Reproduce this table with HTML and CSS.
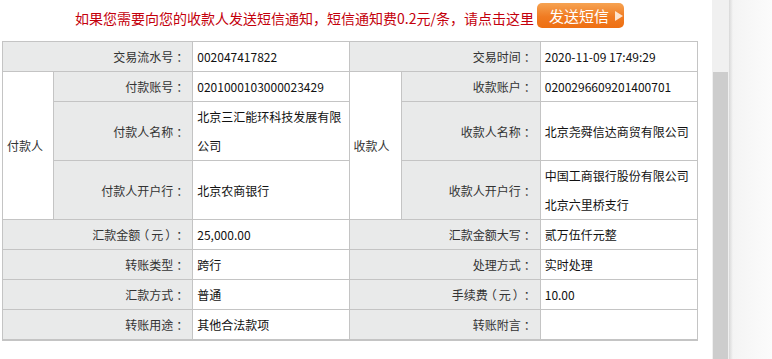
FILE: index.html
```html
<!DOCTYPE html>
<html lang="zh-CN">
<head>
<meta charset="utf-8">
<title>交易详情</title>
<link rel="stylesheet" href="styles.css">
</head>
<body>
<div class="frame">
  <main class="main">
    <div class="notice">
      <span class="notice-text">如果您需要向您的收款人发送短信通知，短信通知费0.2元/条，请点击这里</span>
      <a class="sms-btn" href="#">发送短信<span class="tri"></span></a>
    </div>
    <table class="detail">
      <colgroup>
        <col class="c-grp"><col class="c-lbl"><col class="c-val">
        <col class="c-grp"><col class="c-lbl"><col class="c-val">
      </colgroup>
      <tr>
        <td class="lbl" colspan="2">交易流水号<span class="colon">：</span></td>
        <td class="val">002047417822</td>
        <td class="lbl" colspan="2">交易时间<span class="colon">：</span></td>
        <td class="val">2020-11-09 17:49:29</td>
      </tr>
      <tr>
        <td class="grp" rowspan="3">付款人</td>
        <td class="lbl">付款账号<span class="colon">：</span></td>
        <td class="val">0201000103000023429</td>
        <td class="grp grp-r" rowspan="3">收款人</td>
        <td class="lbl">收款账户<span class="colon">：</span></td>
        <td class="val">0200296609201400701</td>
      </tr>
      <tr>
        <td class="lbl">付款人名称<span class="colon">：</span></td>
        <td class="val">北京三汇能环科技发展有限公司</td>
        <td class="lbl">收款人名称<span class="colon">：</span></td>
        <td class="val">北京尧舜信达商贸有限公司</td>
      </tr>
      <tr>
        <td class="lbl">付款人开户行<span class="colon">：</span></td>
        <td class="val">北京农商银行</td>
        <td class="lbl">收款人开户行<span class="colon">：</span></td>
        <td class="val">中国工商银行股份有限公司北京六里桥支行</td>
      </tr>
      <tr>
        <td class="lbl" colspan="2">汇款金额<span class="paren">（元）</span><span class="colon">：</span></td>
        <td class="val">25,000.00</td>
        <td class="lbl" colspan="2">汇款金额大写<span class="colon">：</span></td>
        <td class="val">贰万伍仟元整</td>
      </tr>
      <tr>
        <td class="lbl" colspan="2">转账类型<span class="colon">：</span></td>
        <td class="val">跨行</td>
        <td class="lbl" colspan="2">处理方式<span class="colon">：</span></td>
        <td class="val">实时处理</td>
      </tr>
      <tr>
        <td class="lbl" colspan="2">汇款方式<span class="colon">：</span></td>
        <td class="val">普通</td>
        <td class="lbl" colspan="2">手续费<span class="paren">（元）</span><span class="colon">：</span></td>
        <td class="val">10.00</td>
      </tr>
      <tr class="last">
        <td class="lbl" colspan="2">转账用途<span class="colon">：</span></td>
        <td class="val">其他合法款项</td>
        <td class="lbl" colspan="2">转账附言<span class="colon">：</span></td>
        <td class="val"></td>
      </tr>
    </table>
  </main>
  <div class="scrollbar"><div class="thumb"></div></div>
  <div class="side"></div>
</div>
</body>
</html>
```

FILE: styles.css
```css
html, body {
  margin: 0;
  padding: 0;
  background: #fff;
  height: 100%;
  overflow: hidden;
}
body {
  font-family: "Noto Sans CJK SC", "Microsoft YaHei", sans-serif;
  color: #333;
}
.frame {
  display: flex;
  height: 359px;
}
.main {
  width: 712px;
  flex: none;
  padding-left: 2px;
  box-sizing: border-box;
}
.notice {
  width: 695px;
  height: 41px;
  display: flex;
  justify-content: center;
  align-items: flex-start;
  gap: 3px;
}
.notice-text {
  margin-top: 8px;
  font-size: 14px;
  line-height: 20px;
  color: #c4000c;
}
.sms-btn {
  margin-top: 3px;
  width: 87px;
  height: 25px;
  box-sizing: border-box;
  border-radius: 5px;
  background: linear-gradient(#f6a352, #f07b22 55%, #ee6f12);
  color: #fff;
  font-size: 15px;
  line-height: 25px;
  text-decoration: none;
  display: flex;
  align-items: center;
  padding-left: 12px;
  gap: 6px;
}
.tri {
  width: 0;
  height: 0;
  border-left: 8px solid #fde3cd;
  border-top: 5px solid transparent;
  border-bottom: 5px solid transparent;
}
.detail {
  border-collapse: collapse;
  table-layout: fixed;
  width: 696px;
  font-size: 12px;
  border-bottom: 2px solid #c4c4c4;
}
.c-grp { width: 51px; }
.c-lbl { width: 139px; }
.c-val { width: 157px; }
.detail td {
  border: 1px solid #c4c4c4;
  padding: 0;
  line-height: 29px;
  vertical-align: middle;
}
.detail .last td {
  border-bottom: 2px solid #c4c4c4;
}
.lbl {
  background: #e9eaea;
  text-align: right;
  padding-right: 4px !important;
  color: #333;
}
.colon {
  font-family: "Noto Sans CJK JP", "Noto Sans CJK SC", sans-serif;
  padding-left: 3px;
}
.paren {
  letter-spacing: 2px;
  margin-left: -3px;
}
.val {
  background: #fff;
  padding-left: 4px !important;
  color: #111;
  word-break: break-all;
}
.grp {
  background: #fff;
  padding-left: 4px !important;
  color: #333;
}
.grp-r {
  padding-left: 3px !important;
}
.scrollbar {
  width: 17px;
  flex: none;
  background: #f0f0f0;
  display: flex;
  flex-direction: column;
  padding: 72px 1px 0;
  box-sizing: border-box;
}
.thumb {
  flex: 1;
  background: #cdcdcd;
}
.side {
  flex: 1;
  background: linear-gradient(to right, #d8d8d8 0, #e6e6e6 2px, #f4f4f4 4px, #f9f9f9 30px, #fbfbfb 100%);
}
```
